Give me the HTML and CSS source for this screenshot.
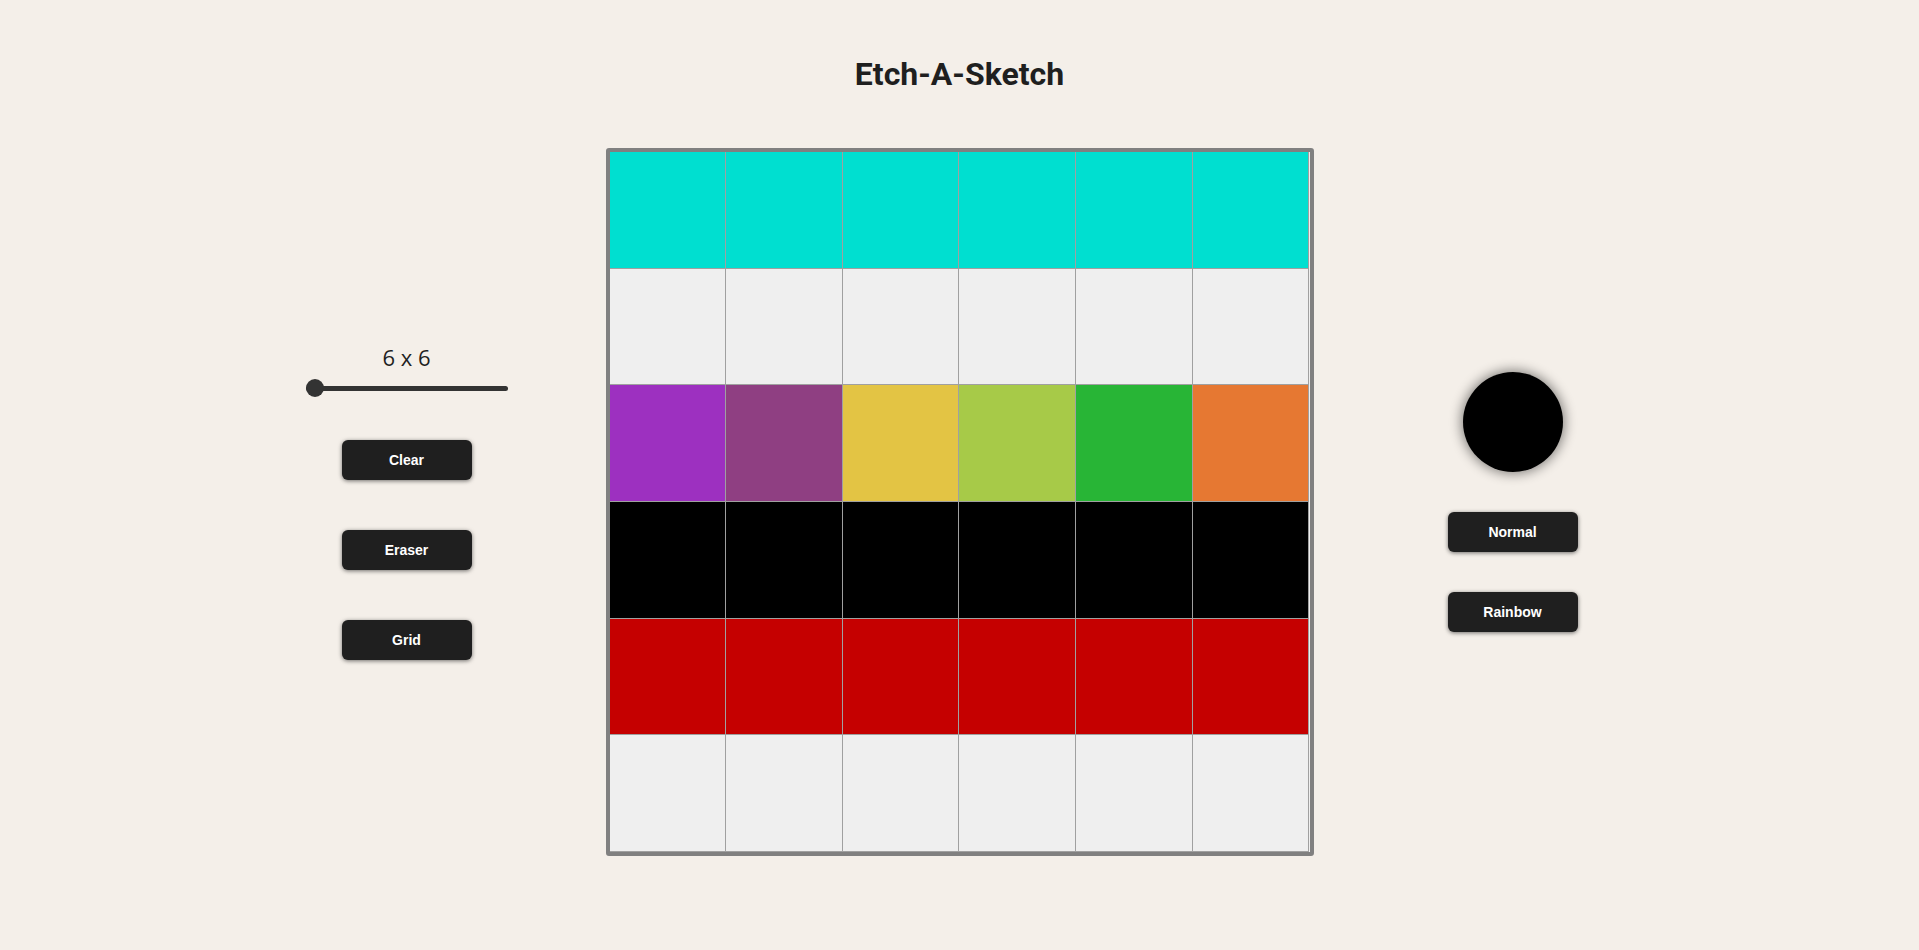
FILE: index.html
```html
<!DOCTYPE html>
<html lang="en">
<head>
<meta charset="utf-8">
<title>Etch-A-Sketch</title>
<link rel="stylesheet" href="styles.css">
</head>
<body>
  <h1 class="title">Etch-A-Sketch</h1>
  <main class="layout">
    <section class="panel panel-left">
      <div class="size-label">6 x 6</div>
      <input class="size-slider" type="range" min="6" max="64" value="6">
      <div class="button-stack button-stack-left">
        <button class="btn">Clear</button>
        <button class="btn">Eraser</button>
        <button class="btn">Grid</button>
      </div>
    </section>

    <section class="board">
      <div class="cell c-cyan"></div><div class="cell c-cyan"></div><div class="cell c-cyan"></div><div class="cell c-cyan"></div><div class="cell c-cyan"></div><div class="cell c-cyan"></div>
      <div class="cell c-light"></div><div class="cell c-light"></div><div class="cell c-light"></div><div class="cell c-light"></div><div class="cell c-light"></div><div class="cell c-light"></div>
      <div class="cell c-purple"></div><div class="cell c-plum"></div><div class="cell c-yellow"></div><div class="cell c-lime"></div><div class="cell c-green"></div><div class="cell c-orange"></div>
      <div class="cell c-black"></div><div class="cell c-black"></div><div class="cell c-black"></div><div class="cell c-black"></div><div class="cell c-black"></div><div class="cell c-black"></div>
      <div class="cell c-red"></div><div class="cell c-red"></div><div class="cell c-red"></div><div class="cell c-red"></div><div class="cell c-red"></div><div class="cell c-red"></div>
      <div class="cell c-light"></div><div class="cell c-light"></div><div class="cell c-light"></div><div class="cell c-light"></div><div class="cell c-light"></div><div class="cell c-light"></div>
    </section>

    <section class="panel panel-right">
      <div class="color-swatch"></div>
      <div class="button-stack button-stack-right">
        <button class="btn">Normal</button>
        <button class="btn">Rainbow</button>
      </div>
    </section>
  </main>
</body>
</html>
```

FILE: styles.css
```css
html, body {
  margin: 0;
  padding: 0;
}

body {
  background: #f4efe9;
  color: #1f1f1f;
  font-family: "Liberation Sans", Arial, sans-serif;
  padding-top: 56px;
  min-height: 100vh;
  box-sizing: border-box;
}

.title {
  margin: 0;
  text-align: center;
  font-family: Roboto, "Liberation Sans", sans-serif;
  font-weight: 700;
  font-size: 32px;
  line-height: 37px;
  color: #1f1f1f;
}

.layout {
  margin-top: 55px;
  display: flex;
  justify-content: center;
  align-items: center;
  gap: 49px;
}

.panel {
  width: 300px;
  display: flex;
  flex-direction: column;
  align-items: center;
}

.size-label {
  font-family: "Open Sans", "DejaVu Sans", sans-serif;
  font-size: 22px;
  line-height: 26px;
  color: #1f1f1f;
}

.size-slider {
  -webkit-appearance: none;
  appearance: none;
  margin: 9px 0 0 0;
  padding: 0;
  width: 202px;
  height: 18px;
  background: transparent;
}

.size-slider::-webkit-slider-runnable-track {
  height: 5px;
  background: #333333;
  border-radius: 3px;
}

.size-slider::-webkit-slider-thumb {
  -webkit-appearance: none;
  appearance: none;
  width: 18px;
  height: 18px;
  border-radius: 50%;
  background: #333333;
  margin-top: -6.5px;
}

.button-stack {
  display: flex;
  flex-direction: column;
  align-items: center;
}

.button-stack-left {
  margin-top: 43px;
  gap: 50px;
}

.button-stack-right {
  margin-top: 40px;
  gap: 40px;
}

.btn {
  width: 130px;
  height: 40px;
  border: none;
  border-radius: 6px;
  background: #1f1f1f;
  color: #ffffff;
  font-family: "Liberation Sans", Arial, sans-serif;
  font-weight: 700;
  font-size: 14px;
  box-shadow: 0 1px 4px rgba(0, 0, 0, 0.55);
  cursor: pointer;
}

.board {
  width: 700px;
  height: 700px;
  border: 4px solid #808080;
  border-radius: 3px;
  display: grid;
  grid-template-columns: repeat(6, 1fr);
  grid-template-rows: repeat(6, 1fr);
  background: #efefef;
}

.cell {
  box-sizing: border-box;
  border-right: 1px solid #a0a0a0;
  border-bottom: 1px solid #a0a0a0;
}

.c-cyan { background: #00dfd0; }
.c-light { background: #efefef; }
.c-purple { background: #9d30c0; }
.c-plum { background: #8f3f82; }
.c-yellow { background: #e3c444; }
.c-lime { background: #a7ca48; }
.c-green { background: #28b536; }
.c-orange { background: #e67832; }
.c-black { background: #000000; }
.c-red { background: #c50000; }

.color-swatch {
  width: 100px;
  height: 100px;
  border-radius: 50%;
  background: #000000;
  box-shadow: 0 0 12px 2px rgba(0, 0, 0, 0.45);
}
```
